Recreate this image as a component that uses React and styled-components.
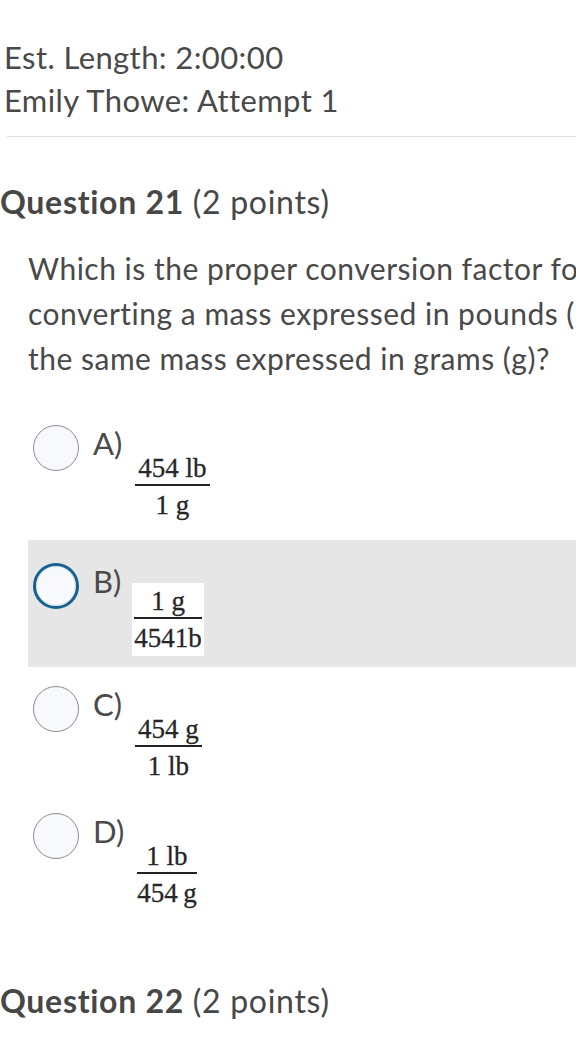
import styled, { createGlobalStyle } from "styled-components";

const GlobalStyle = createGlobalStyle`
  html, body {
    margin: 0;
    padding: 0;
    background: #ffffff;
    overflow: hidden;
  }
  body {
    font-family: Lato, "Open Sans", sans-serif;
    color: #494949;
  }
`;

const options = [
  { letter: "A", top: "454 lb", bottom: "1 g" },
  { letter: "B", top: "1 g", bottom: "4541b", selected: true },
  { letter: "C", top: "454 g", bottom: "1 lb" },
  { letter: "D", top: "1 lb", bottom: "454\u2009g" },
];

export default function App() {
  return (
    <>
      <GlobalStyle />
      <Page>
        <Header>
          <HeaderLine>Est. Length: 2:00:00</HeaderLine>
          <HeaderLine>Emily Thowe: Attempt 1</HeaderLine>
        </Header>
        <Divider />

        <QuestionTitle>
          <strong>Question 21</strong> (2 points)
        </QuestionTitle>

        <QuestionText>
          <Line>Which is the proper conversion factor for</Line>
          <Line>converting a mass expressed in pounds (lb) to</Line>
          <Line>the same mass expressed in grams (g)?</Line>
        </QuestionText>

        <Options>
          {options.map((o) => (
            <Option key={o.letter} $selected={o.selected}>
              <Radio $selected={o.selected} />
              <Letter>{o.letter})</Letter>
              <Fraction $boxed={o.selected}>
                <Numer>{o.top}</Numer>
                <Denom>{o.bottom}</Denom>
              </Fraction>
            </Option>
          ))}
        </Options>

        <NextTitle>
          <strong>Question 22</strong> (2 points)
        </NextTitle>
      </Page>
    </>
  );
}

const Page = styled.div`
  width: 576px;
  overflow: hidden;
  padding-bottom: 40px;
`;

const Header = styled.div`
  padding: 36px 0 0 4px;
`;

const HeaderLine = styled.div`
  font-size: 31px;
  line-height: 43px;
  letter-spacing: 0.4px;
`;

const Divider = styled.hr`
  border: none;
  border-top: 1px solid #dcdcdc;
  margin: 14px 0 0 7px;
`;

const QuestionTitle = styled.h2`
  margin: 47px 0 0 0;
  font-size: 32px;
  line-height: 36px;
  letter-spacing: 0.7px;
  font-weight: 400;
  color: #474747;

  strong {
    font-weight: 700;
  }
`;

const NextTitle = styled(QuestionTitle)`
  margin-top: 62px;
`;

const QuestionText = styled.div`
  margin-top: 26px;
  padding-left: 28px;
  font-size: 30px;
  line-height: 45px;
  letter-spacing: 0.5px;
`;

const Line = styled.span`
  display: block;
  white-space: nowrap;
`;

const Options = styled.div`
  margin-top: 32px;
  margin-left: 28px;
  display: flex;
  flex-direction: column;
`;

const Option = styled.div`
  display: flex;
  align-items: flex-start;
  height: 127px;
  box-sizing: border-box;
  padding: ${(p) => (p.$selected ? "23px" : "19px")} 0 0 5px;
  background: ${(p) => (p.$selected ? "#e6e6e6" : "transparent")};

  &:first-child {
    padding-top: 12px;
  }
`;

const Radio = styled.span`
  width: 46px;
  height: 46px;
  flex: none;
  box-sizing: border-box;
  border-radius: 50%;
  background: #f7f9fc;
  border: ${(p) => (p.$selected ? "3px solid #17618c" : "1px solid #8a8a8a")};
  box-shadow: ${(p) => (p.$selected ? "inset 0 0 0 1px #cfe6f5" : "none")};
`;

const Letter = styled.span`
  margin: 0 0 0 14px;
  font-size: 31px;
  line-height: 36px;
  color: #4a4a4a;
`;

const Fraction = styled.div`
  margin: ${(p) => (p.$boxed ? "20px" : "25px")} 0 0 11px;
  display: inline-flex;
  flex-direction: column;
  align-items: stretch;
  padding: 3px 2px 2px;
  background: ${(p) => (p.$boxed ? "#ffffff" : "transparent")};
  font-family: "Liberation Serif", "Times New Roman", serif;
  font-size: 27px;
  color: #262626;
  text-align: center;
  -webkit-text-stroke: 0.3px #262626;
`;

const Numer = styled.div`
  line-height: 30px;
  padding: 0 3px 1px;
  border-bottom: 2px solid #222;
  white-space: nowrap;
`;

const Denom = styled.div`
  line-height: 32px;
  padding-top: 3px;
  white-space: nowrap;
`;
